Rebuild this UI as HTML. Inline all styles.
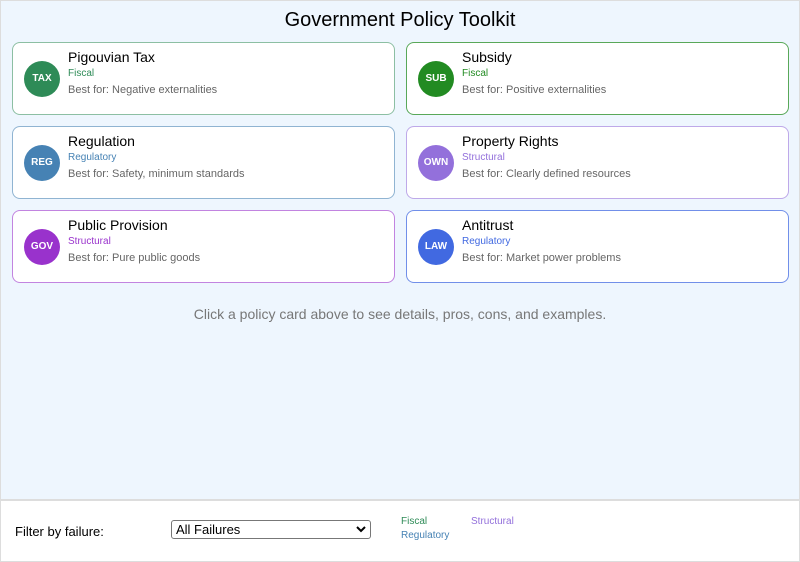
<!DOCTYPE html>
<html><head><style>
*{box-sizing:border-box;margin:0;padding:0}
body{width:800px;height:562px;font-family:"Liberation Sans",Arial,sans-serif;background:#fff;overflow:hidden}
.main{position:absolute;left:0;top:0;width:800px;height:500px;background:#eef6fe;border:1px solid #ddd;border-bottom:none}
h1{position:absolute;top:8px;width:100%;text-align:center;font-size:20px;font-weight:normal;color:#000}
.card{position:absolute;width:383px;height:73px;background:#fff;border:1px solid;border-radius:8px}
.c{position:absolute;left:11px;top:18px;width:36px;height:36px;border-radius:50%;color:#fff;font-size:10px;font-weight:bold;text-align:center;line-height:36px}
.t{position:absolute;left:55px;top:6px;font-size:14px;color:#000}
.k{position:absolute;left:55px;top:25px;font-size:10px}
.b{position:absolute;left:55px;top:41px;font-size:11px;color:#666}
.hint{position:absolute;top:305px;width:100%;text-align:center;font-size:14px;color:#777}
.foot{position:absolute;left:0;top:499px;width:800px;height:63px;border:1px solid #ddd;border-top:2px solid #ddd;background:#fff}
</style></head><body>
<div class="main">
<h1>Government Policy Toolkit</h1>
<div class="card" style="left:11px;top:41px;border-color:rgba(46,139,87,.55)"><div class="c" style="background:#2e8b57">TAX</div><div class="t">Pigouvian Tax</div><div class="k" style="color:#2e8b57">Fiscal</div><div class="b">Best for: Negative externalities</div></div>
<div class="card" style="left:405px;top:41px;border-color:rgba(34,139,34,.75)"><div class="c" style="background:#228b22">SUB</div><div class="t">Subsidy</div><div class="k" style="color:#228b22">Fiscal</div><div class="b">Best for: Positive externalities</div></div>
<div class="card" style="left:11px;top:125px;border-color:rgba(70,130,180,.6)"><div class="c" style="background:#4682b4">REG</div><div class="t">Regulation</div><div class="k" style="color:#4682b4">Regulatory</div><div class="b">Best for: Safety, minimum standards</div></div>
<div class="card" style="left:405px;top:125px;border-color:rgba(147,112,219,.6)"><div class="c" style="background:#9370db">OWN</div><div class="t">Property Rights</div><div class="k" style="color:#9370db">Structural</div><div class="b">Best for: Clearly defined resources</div></div>
<div class="card" style="left:11px;top:209px;border-color:rgba(153,50,204,.6)"><div class="c" style="background:#9932cc">GOV</div><div class="t">Public Provision</div><div class="k" style="color:#9932cc">Structural</div><div class="b">Best for: Pure public goods</div></div>
<div class="card" style="left:405px;top:209px;border-color:rgba(65,105,225,.75)"><div class="c" style="background:#4169e1">LAW</div><div class="t">Antitrust</div><div class="k" style="color:#4169e1">Regulatory</div><div class="b">Best for: Market power problems</div></div>
<div class="hint">Click a policy card above to see details, pros, cons, and examples.</div>
</div>
<div class="foot">
<div style="position:absolute;left:14px;top:23px;font-size:13px;color:#000">Filter by failure:</div>
<div style="position:absolute;left:170px;top:19px;width:200px;height:19px;border:1px solid #777;border-radius:3px;font-size:13px;padding-left:4px;line-height:17px">All Failures<svg style="position:absolute;right:4px;top:5px" width="10" height="7" viewBox="0 0 10 7"><path d="M1 1L5 5L9 1" stroke="#000" stroke-width="2" fill="none"/></svg></div>
<div style="position:absolute;left:400px;top:15px;font-size:10px;color:#2e8b57">Fiscal</div>
<div style="position:absolute;left:470px;top:15px;font-size:10px;color:#9370db">Structural</div>
<div style="position:absolute;left:400px;top:29px;font-size:10px;color:#4682b4">Regulatory</div>
</div>
</body></html>
